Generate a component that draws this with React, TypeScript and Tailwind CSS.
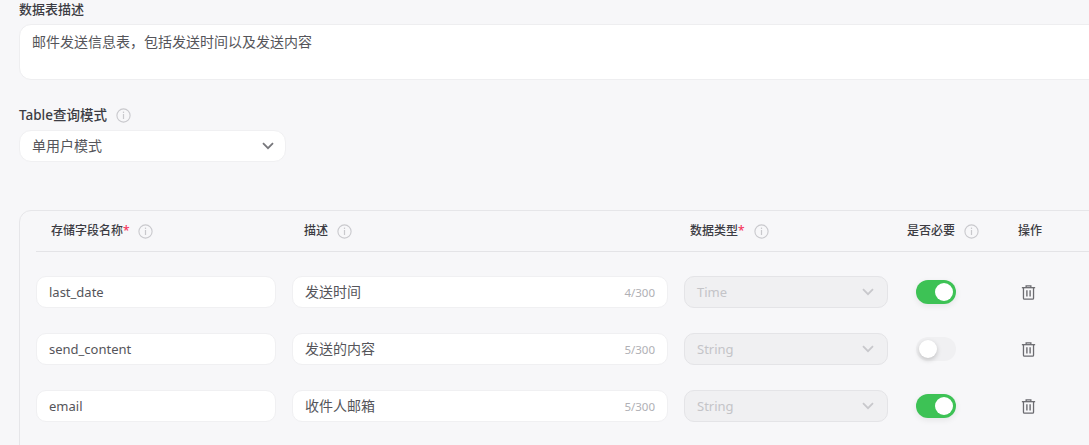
import React from "react";

const FONT = "font-['Noto_Sans','Noto_Sans_CJK_SC',sans-serif]";

function Info() {
  return (
    <svg width="15" height="15" viewBox="0 0 15 15" fill="none" className="shrink-0">
      <circle cx="7.5" cy="7.5" r="6.6" stroke="#c9c9cd" strokeWidth="1.1" />
      <rect x="6.9" y="3.6" width="1.2" height="1.4" fill="#c9c9cd" />
      <rect x="6.9" y="6" width="1.2" height="5" fill="#c9c9cd" />
    </svg>
  );
}

function Chevron({ color }: { color: string }) {
  return (
    <svg width="12" height="8" viewBox="0 0 12 8" fill="none">
      <path d="M1 1.2 L6 6.2 L11 1.2" stroke={color} strokeWidth="1.8" />
    </svg>
  );
}

function Trash() {
  return (
    <svg width="15" height="15" viewBox="0 0 14 14" fill="none">
      <path d="M0.8 2.5 H13.2" stroke="#6b6b70" strokeWidth="1.2" />
      <path d="M4.8 2.3 V0.9 H9.2 V2.3" stroke="#6b6b70" strokeWidth="1.2" />
      <path d="M2.3 2.6 V12.3 Q2.3 13.2 3.2 13.2 H10.8 Q11.7 13.2 11.7 12.3 V2.6" stroke="#6b6b70" strokeWidth="1.2" />
      <path d="M5.5 5 V10.8 M8.5 5 V10.8" stroke="#6b6b70" strokeWidth="1.3" />
    </svg>
  );
}

function Toggle({ on }: { on: boolean }) {
  return on ? (
    <div className="w-10 h-6 rounded-full bg-[#3dc255] flex items-center justify-end pr-[3px] shadow-[0_2px_6px_rgba(0,0,0,0.08)]">
      <div className="w-[18px] h-[18px] rounded-full bg-white" />
    </div>
  ) : (
    <div className="w-10 h-6 rounded-full bg-[#f0f0f2] flex items-center pl-[3px]">
      <div className="w-[18px] h-[18px] rounded-full bg-white shadow-[0_2px_5px_rgba(0,0,0,0.2)]" />
    </div>
  );
}

const rows = [
  { name: "last_date", desc: "发送时间", count: "4/300", type: "Time", on: true },
  { name: "send_content", desc: "发送的内容", count: "5/300", type: "String", on: false },
  { name: "email", desc: "收件人邮箱", count: "5/300", type: "String", on: true },
];

const head = "text-[12px] font-medium text-[#3c3c43] leading-4";
const star = <span className="text-[#f5365c]">*</span>;

export default function App() {
  return (
    <div className={`${FONT} w-[1089px] h-[445px] overflow-hidden bg-[#f7f7f9] pl-[19px]`}>
      <div className="w-[1110px]">
        <div className="h-6 text-[13px] font-medium leading-[18px] text-[#3c3c43]">数据表描述</div>
        <div className="h-14 rounded-xl bg-white border border-[#eeeef0] px-3 pt-[6px] text-[14px] leading-5 text-[#55555a] font-['Noto_Sans_CJK_SC',sans-serif]">
          {"邮件发送信息表\uFF0C包括发送时间以及发送内容"}
        </div>

        <div className="mt-[23px] mb-[3px] h-[24px] flex items-center gap-[9px] text-[13px] font-medium text-[#3c3c43]">
          <span className="text-[13.5px]">Table查询模式</span>
          <Info />
        </div>
        <div className="w-[267px] h-8 rounded-xl bg-white border border-[#f0f0f2] pl-3 pr-[11px] pb-[2px] flex items-center justify-between text-[14px] text-[#55555a]">
          <span>单用户模式</span>
          <span className="flex pt-[2px]">
            <Chevron color="#77777c" />
          </span>
        </div>

        <div className="mt-12 h-[300px] rounded-tl-xl rounded-bl-xl border border-[#e6e6e9] pl-4">
          <div className="h-[41px] border-b border-[#e4e4e7] flex items-center">
            <div className="w-[256px] pl-[15px] flex items-center gap-[8px]">
              <span className={head}>存储字段名称{star}</span>
              <Info />
            </div>
            <div className="w-[392px] pl-3 flex items-center gap-[9px]">
              <span className={head}>描述</span>
              <Info />
            </div>
            <div className="w-[223px] pl-[6px] flex items-center gap-[9px]">
              <span className={head}>数据类型{star}</span>
              <Info />
            </div>
            <div className="w-[111px] flex items-center gap-[9px]">
              <span className={head}>是否必要</span>
              <Info />
            </div>
            <span className={head}>操作</span>
          </div>

          <div className="pt-6 flex flex-col gap-[25px]">
            {rows.map((r) => (
              <div key={r.name} className="flex items-center h-8">
                <div className="w-[240px] h-8 rounded-[10px] bg-white border border-[#f0f0f2] px-3 pt-[2px] flex items-center text-[13px] text-[#55555a]">
                  {r.name}
                </div>
                <div className="ml-4 w-[376px] h-8 rounded-[10px] bg-white border border-[#f0f0f2] px-3 flex items-center justify-between text-[14px] text-[#55555a]">
                  <span className="pb-[2px]">{r.desc}</span>
                  <span className="text-[11.5px] text-[#b0b0b5] pt-[1px]">{r.count}</span>
                </div>
                <div className="ml-4 w-[204px] h-8 rounded-[10px] bg-[#f0f0f2] border border-[#e4e4e7] pl-3 pr-[13px] flex items-center justify-between text-[13px] text-[#c4c4c8]">
                  <span className="pt-[2px]">{r.type}</span>
                  <Chevron color="#c8c8cc" />
                </div>
                <div className="ml-7 w-10">
                  <Toggle on={r.on} />
                </div>
                <div className="ml-[65px] flex">
                  <Trash />
                </div>
              </div>
            ))}
          </div>
        </div>
      </div>
    </div>
  );
}
